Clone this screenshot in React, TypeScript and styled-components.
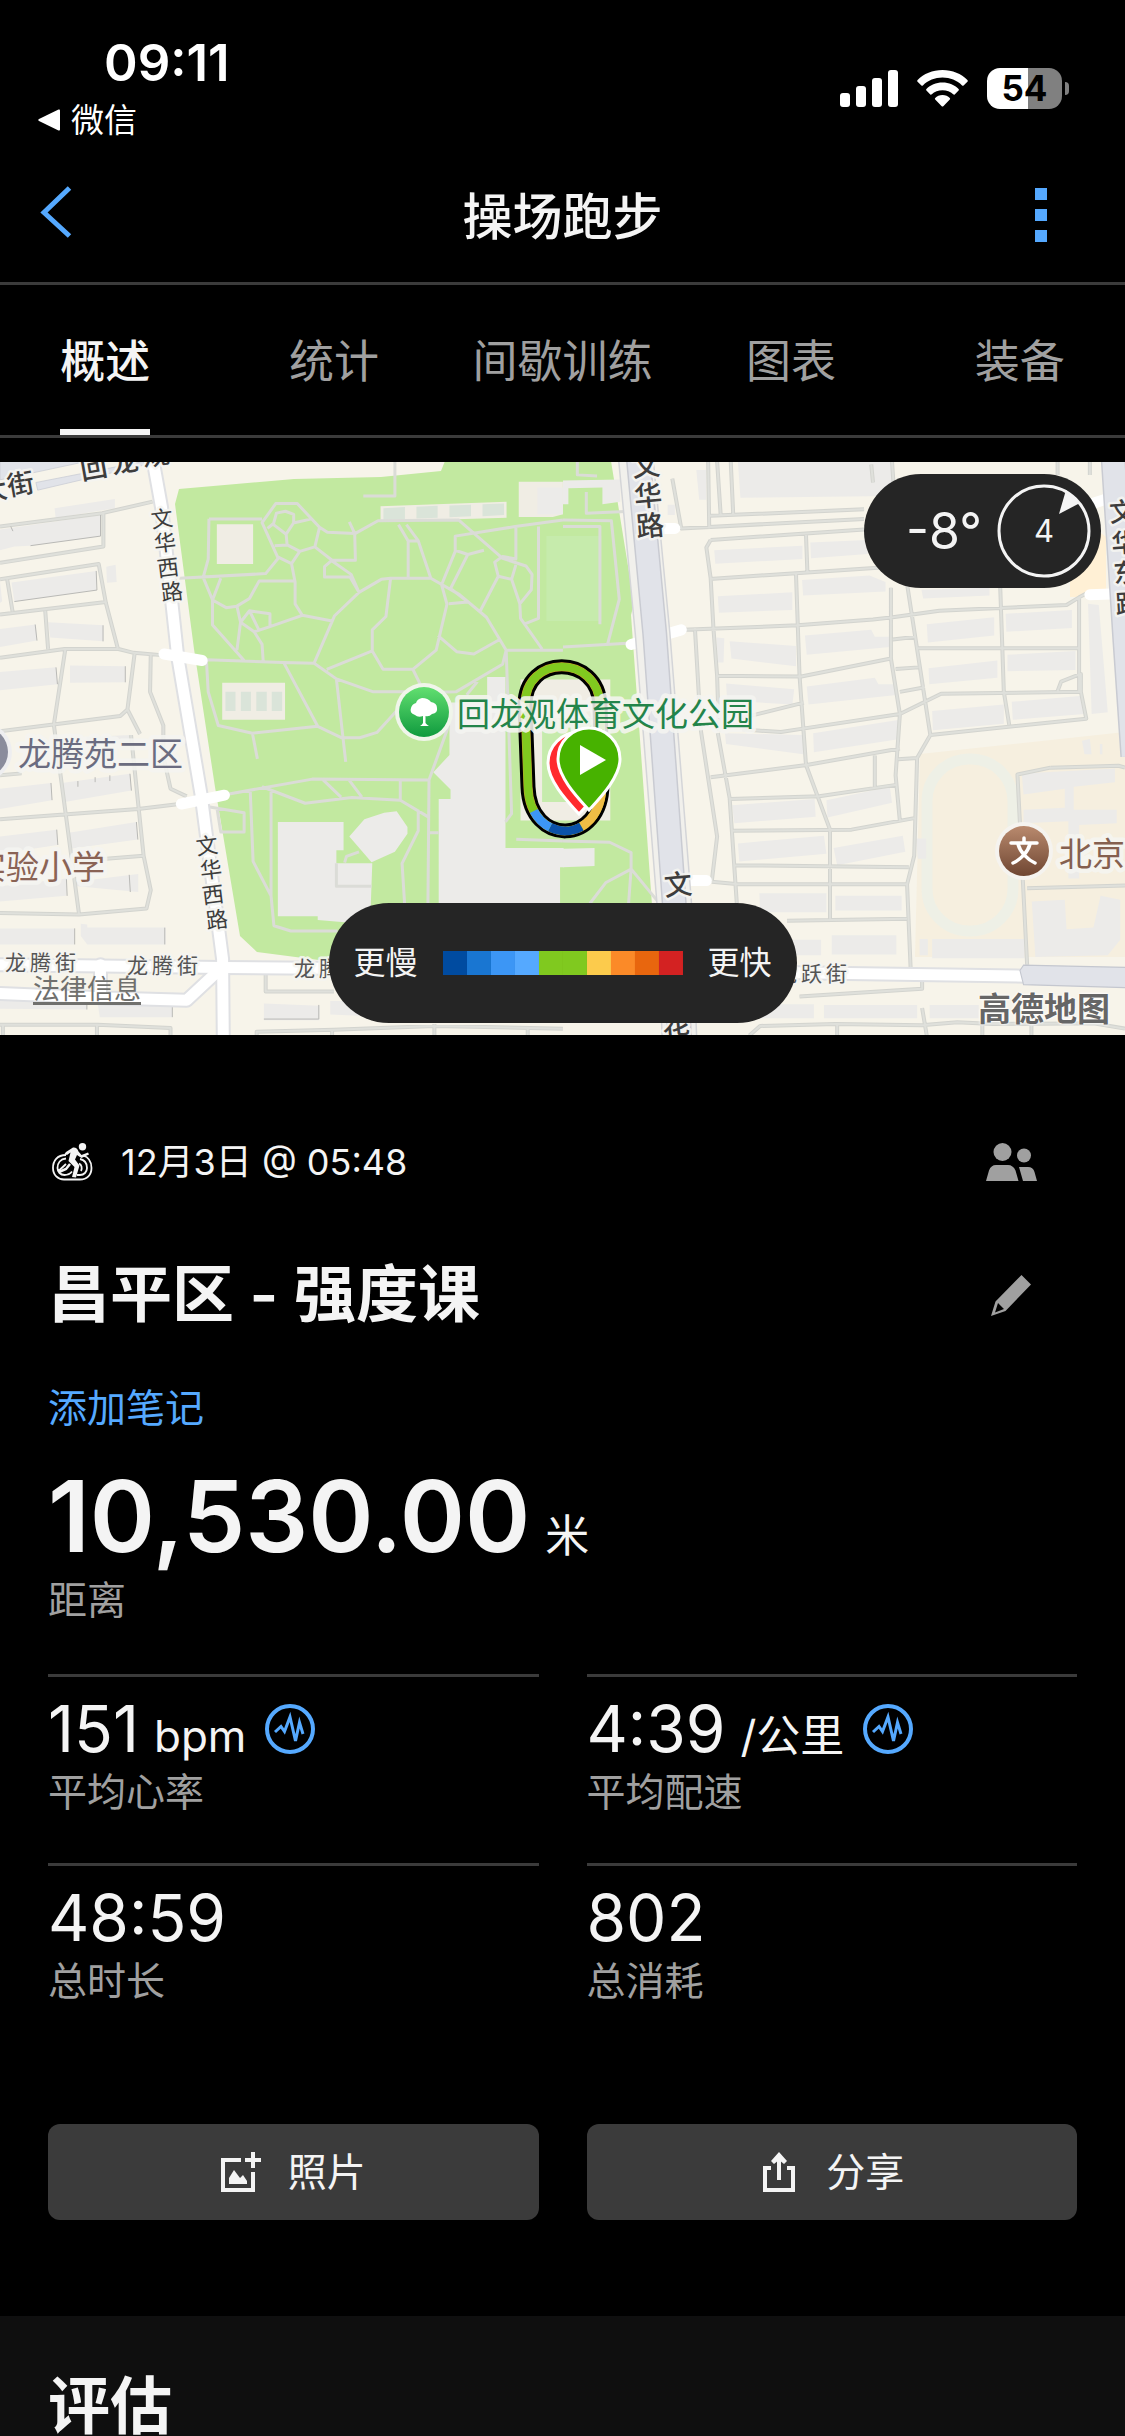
import React from "react";
import styled, { createGlobalStyle } from "styled-components";

const color = {
  bg: "#000000",
  section: "#0f0f0f",
  surface: "#3b3b3b",
  pill: "#252525",
  text: "#f4f4f4",
  muted: "#a0a0a0",
  accent: "#55a9ff",
};

const GlobalStyle = createGlobalStyle`
  *, *::before, *::after { box-sizing: border-box; }
  body {
    margin: 0;
    background: ${color.bg};
    color: ${color.text};
    font-family: Inter, "Noto Sans CJK SC", sans-serif;
  }
  button { font: inherit; color: inherit; background: none; border: 0; padding: 0; }
  a { color: inherit; text-decoration: none; }
  h1, h2, p, dl, dd, dt { margin: 0; }
  svg { display: block; }
`;

const Page = styled.div`
  display: flex;
  flex-direction: column;
  min-height: 100vh;
  overflow-x: hidden;
`;

/* ---------- status bar ---------- */

const StatusBar = styled.div`
  display: flex;
  justify-content: space-between;
  align-items: flex-start;
  padding: 31px 56px 0 38px;
  color: #ffffff;
`;

const StatusLeft = styled.div`
  display: flex;
  flex-direction: column;
`;

const Clock = styled.time`
  padding-left: 66px;
  font-size: 51px;
  line-height: 64px;
  font-weight: 600;
`;

const ReturnLink = styled.a`
  display: flex;
  align-items: center;
  gap: 11px;
  font-size: 33px;
  line-height: 50px;
`;

const StatusRight = styled.div`
  display: flex;
  align-items: center;
  gap: 19px;
  padding-top: 37px;
`;

const Battery = styled.div`
  display: flex;
  align-items: center;
  gap: 3px;
`;

const BatteryBody = styled.div`
  width: 75px;
  height: 41px;
  border-radius: 13px;
  background: linear-gradient(90deg, #ffffff 55%, #808080 55%);
  color: #000000;
  font-size: 35px;
  line-height: 41px;
  font-weight: 700;
  text-align: center;
`;

const BatteryTip = styled.div`
  width: 4px;
  height: 13px;
  border-radius: 0 6px 6px 0;
  background: #808080;
`;

/* ---------- navigation ---------- */

const NavBar = styled.header`
  display: grid;
  grid-template-columns: 90px 1fr 90px;
  align-items: center;
  height: 140px;
  padding: 3px 39px 0;
  border-bottom: 3px solid ${color.surface};
`;

const NavTitle = styled.h1`
  padding-top: 4px;
  font-size: 50px;
  line-height: 60px;
  font-weight: 500;
  text-align: center;
`;

const NavButton = styled.button<{ $end?: boolean }>`
  display: flex;
  justify-content: ${(p) => (p.$end ? "flex-end" : "flex-start")};
  align-items: center;
  height: 90px;
  padding: ${(p) => (p.$end ? "0 39px 0 0" : "0 0 6px")};
`;

const Dots = styled.span`
  display: grid;
  gap: 9px;
  i {
    width: 12px;
    height: 12px;
    background: ${color.accent};
  }
`;

const Tabs = styled.nav`
  display: grid;
  grid-template-columns: repeat(5, 1fr);
  justify-items: center;
  height: 153px;
  margin: 0 -9px 24px;
  border-bottom: 3px solid ${color.surface};
`;

const Tab = styled.button<{ $active?: boolean }>`
  height: 150px;
  padding-top: 9px;
  border-bottom: 6px solid ${(p) => (p.$active ? color.text : "transparent")};
  color: ${(p) => (p.$active ? color.text : color.muted)};
  font-size: 45px;
  line-height: 60px;
  font-weight: ${(p) => (p.$active ? 500 : 400)};
  white-space: nowrap;
`;

/* ---------- map ---------- */

const MapArea = styled.section`
  position: relative;
  height: 573px;
  overflow: hidden;
  background: #f7f4ea;
  > svg {
    width: 100%;
    height: 100%;
  }
`;

const WeatherPill = styled.div`
  position: absolute;
  top: 12px;
  right: 24px;
  display: flex;
  align-items: center;
  gap: 15px;
  height: 114px;
  padding: 0 10px 0 42px;
  border-radius: 57px;
  background: ${color.pill};
  font-size: 50px;
  line-height: 60px;
`;

const LegendPill = styled.div`
  position: absolute;
  bottom: 12px;
  left: 50%;
  transform: translateX(-50%);
  display: flex;
  align-items: center;
  gap: 25px;
  height: 120px;
  padding: 0 25px;
  border-radius: 60px;
  background: ${color.pill};
  font-size: 32px;
  line-height: 48px;
  white-space: nowrap;
`;

const Scale = styled.div`
  display: flex;
`;

const Swatch = styled.i<{ $fill: string }>`
  width: 24px;
  height: 24px;
  background: ${(p) => p.$fill};
`;

const LegalLink = styled.a`
  position: absolute;
  left: 33px;
  bottom: 30px;
  border-bottom: 3px solid #70706d;
  color: #70706d;
  font-size: 27px;
  line-height: 24px;
`;

const MapCredit = styled.span`
  position: absolute;
  right: 15px;
  bottom: 6px;
  color: #666666;
  font-size: 33px;
  line-height: 40px;
  font-weight: 700;
  text-shadow: 0 0 3px #ffffff, 0 0 3px #ffffff;
`;

/* ---------- summary ---------- */

const Summary = styled.main`
  display: flex;
  flex-direction: column;
  padding: 97px 48px 96px;
`;

const Row = styled.div<{ $height: number; $after: number }>`
  display: flex;
  align-items: center;
  justify-content: space-between;
  height: ${(p) => p.$height}px;
  margin-bottom: ${(p) => p.$after}px;
`;

const DateLine = styled.p`
  display: flex;
  align-items: center;
  gap: 28px;
  padding-left: 4px;
  font-size: 36px;
  line-height: 48px;
`;

const Title = styled.h2`
  font-size: 62px;
  line-height: 84px;
  font-weight: 600;
`;

const IconButton = styled.button`
  display: grid;
  place-items: center;
  width: 132px;
  height: 60px;
  color: ${color.muted};
`;

const NoteLink = styled.a`
  align-self: flex-start;
  color: ${color.accent};
  font-size: 39px;
  line-height: 48px;
`;

const Distance = styled.dl`
  display: flex;
  flex-direction: column-reverse;
  margin-top: 24px;
  margin-bottom: 50px;
`;

const Label = styled.dt`
  color: ${color.muted};
  font-size: 39px;
  line-height: 48px;
`;

const BigValue = styled.dd`
  display: flex;
  align-items: baseline;
  gap: 15px;
  font-size: 99px;
  line-height: 120px;
  font-weight: 600;
`;

const Unit = styled.span`
  font-size: 44px;
  line-height: 60px;
  font-weight: 400;
`;

const Stats = styled.dl`
  display: grid;
  grid-template-columns: 1fr 1fr;
  gap: 47px 48px;
`;

const Stat = styled.div`
  display: flex;
  flex-direction: column-reverse;
  gap: 3px;
  padding-top: 16px;
  border-top: 3px solid ${color.surface};
`;

const Value = styled.dd`
  display: flex;
  align-items: baseline;
  gap: 15px;
  height: 72px;
  font-size: 64px;
  line-height: 72px;
  svg {
    align-self: center;
    margin-left: 4px;
  }
`;

const Actions = styled.div`
  display: grid;
  grid-template-columns: 1fr 1fr;
  gap: 48px;
  margin-top: 119px;
`;

const ActionButton = styled.button`
  display: flex;
  align-items: center;
  justify-content: center;
  gap: 27px;
  height: 96px;
  border-radius: 12px;
  background: ${color.surface};
  font-size: 39px;
  line-height: 48px;
`;

const Assessment = styled.section`
  flex: 1;
  padding: 61px 48px 0;
  background: ${color.section};
`;

const SectionTitle = styled.h2`
  font-size: 62px;
  line-height: 60px;
  font-weight: 600;
`;

/* ---------- icons ---------- */

const SignalIcon = () => (
  <svg width="58" height="37" fill="#fff" aria-hidden="true">
    <rect x="0" y="23" width="10" height="14" rx="3" />
    <rect x="16" y="16" width="10" height="21" rx="3" />
    <rect x="32" y="8" width="10" height="29" rx="3" />
    <rect x="48" y="0" width="10" height="37" rx="3" />
  </svg>
);

const WifiIcon = () => (
  <svg width="51" height="37" viewBox="0 0 51 37" fill="#fff" aria-hidden="true">
    <path d="M25.500 0C35.500 0 44.300 3.800 50.400 10Q51.200 10.900 50.400 11.700L46.600 15.500Q45.900 16.100 45.100 15.400C40 10.500 33.100 7.600 25.500 7.600S11 10.500 5.900 15.400Q5.100 16.100 4.400 15.500L.6 11.700Q-.2 10.900 .6 10C6.700 3.800 15.500 0 25.500 0Z" />
    <path d="M25.500 12.600C32 12.600 37.700 15.100 41.600 19Q42.300 19.800 41.600 20.500L37.700 24.400Q37 25 36.200 24.300C33.500 21.700 29.700 20.200 25.500 20.200S17.500 21.700 14.800 24.300Q14 25 13.300 24.400L9.400 20.500Q8.700 19.800 9.400 19C13.300 15.100 19 12.600 25.500 12.600Z" />
    <path d="M25.500 25C28.500 25 31 26.100 32.800 27.900Q33.500 28.700 32.800 29.400L26.300 36.200Q25.500 37 24.700 36.200L18.200 29.400Q17.500 28.700 18.200 27.900C20 26.100 22.500 25 25.500 25Z" />
  </svg>
);

const BackTriangle = () => (
  <svg width="22" height="22" fill="#fff" aria-hidden="true">
    <path d="M22 1.500V20.500Q22 22 20.500 21.400L1 12Q-.5 11 1 10L20.500 .6Q22 0 22 1.500Z" />
  </svg>
);

const ChevronIcon = () => (
  <svg width="34" height="52" fill="none" stroke={color.accent} strokeWidth="5" aria-hidden="true">
    <path d="M30.500 2L5 26.500L30.500 50" />
  </svg>
);

const CyclistIcon = () => (
  <svg width="41" height="38" viewBox="0 0 41 38" fill="none" stroke={color.text} aria-hidden="true">
    <path
      strokeWidth="1.800"
      d="M14 12C5 12 1 18 1 25C1 32 6 36.500 12 36.500H28C35 36.500 39.500 32 39.500 25C39.500 18 36 14 31 12.500"
    />
    <path strokeWidth="1.800" d="M14 15.500C8.500 16 5.500 20 5.500 25C5.500 29 8.500 32 12.500 32C16 32 18 31 20 28.500M28 16C33 17 35 20.500 35 25C35 29 32 32 28 32H25M6.500 28L14 21M27 20.500C29.500 21.500 30.500 25 29 28" />
    <path
      fill={color.text}
      stroke="none"
      d="M14 9L21 4.500Q25 4 26.500 8.500L29.500 12L36 9.500L37 11.500L29.500 15L25 12L23 16.500L27.500 22.500L24 34.500L20 34L22.500 24L16.500 18L18.500 9.500L15 12L12.500 11Z"
    />
    <path stroke={color.text} strokeWidth="2.500" d="M18 21L14 26L7 29" />
    <circle cx="30.500" cy="3.700" r="3.700" fill={color.text} stroke="none" />
  </svg>
);

const PeopleIcon = () => (
  <svg width="51" height="38" viewBox="0 0 51 38" fill="currentColor" aria-hidden="true">
    <circle cx="16.500" cy="9" r="9" />
    <circle cx="38" cy="12.500" r="7" />
    <path d="M0 38L3 27.500Q5 22 10 22H22Q27 22 29.500 27.500L32.500 38ZM33 24H42Q47 24 48.500 29L51 38H37Z" />
  </svg>
);

const PencilIcon = () => (
  <svg width="40" height="41" viewBox="0 0 40 41" fill="currentColor" aria-hidden="true">
    <path
      fillRule="evenodd"
      d="M30.500 0L40 9.500L14.500 36L0 41L4.500 26.500ZM7 28L4 37.500L13 34Z"
    />
  </svg>
);

const PulseIcon = () => (
  <svg width="50" height="50" fill="none" stroke={color.accent} aria-hidden="true">
    <circle cx="25" cy="25" r="23" strokeWidth="4" />
    <path strokeWidth="3" d="M10 28L16 22.500L19.500 27.500L25 13L30.500 37L34.500 18.500L38 30" />
  </svg>
);

const AddPhotoIcon = () => (
  <svg width="40" height="40" fill="none" stroke={color.text} strokeWidth="4" aria-hidden="true">
    <path d="M20 8H2V38H32V20M24 8H40M32 0V16" />
    <path fill={color.text} stroke="none" d="M8 32V26L13 18L19 26L22 23L26 29V32Z" />
  </svg>
);

const ShareIcon = () => (
  <svg width="40" height="40" viewBox="-4 0 40 40" fill="none" stroke={color.text} strokeWidth="4" aria-hidden="true">
    <path d="M8 16H2V38H30V16H24M16 28V5" />
    <path fill={color.text} stroke="none" d="M16 0L24 9L21 12L16 8L11 12L8 9Z" />
  </svg>
);

const WindDial = () => (
  <svg width="94" height="94" viewBox="0 0 94 94" role="img" aria-label="风速 4">
    <circle cx="47" cy="47" r="45" fill="none" stroke={color.text} strokeWidth="3" />
    <path fill={color.text} d="M62 30L69 6L83 19Z" />
    <text x="47" y="58" fill={color.text} fontSize="31" textAnchor="middle">
      4
    </text>
  </svg>
);

/* ---------- map drawing ---------- */

const TileLines = styled.g<{ $stroke: string; $width: number }>`
  fill: none;
  stroke: ${(p) => p.$stroke};
  stroke-width: ${(p) => p.$width}px;
  stroke-linejoin: round;
  path {
    vector-effect: non-scaling-stroke;
  }
`;

const RoundLines = styled(TileLines)`
  stroke-linecap: round;
`;

const Buildings = styled.path`
  fill: #ecebe9;
`;

const MapText = styled.text<{ $fill: string; $size: number; $weight?: number; $halo?: number }>`
  fill: ${(p) => p.$fill};
  font-family: "Noto Sans CJK SC", sans-serif;
  font-size: ${(p) => p.$size}px;
  font-weight: ${(p) => p.$weight ?? 400};
  stroke: rgba(245, 245, 241, 0.9);
  stroke-width: ${(p) => p.$halo ?? 5}px;
  stroke-linejoin: round;
  paint-order: stroke;
`;

const WEST = "translate(0 -12) scale(0.359 0.3827)";
const EAST = "translate(563 -12) scale(0.3584 0.3827)";

const westLanes =
  "M0 200L285 165L425 135M288 165V252L0 295M0 338L275 298L295 400L328 518M20 338L35 422M0 430L295 397M126 420L134 520M0 543L180 520L330 520L372 530L450 536M182 520L150 718M0 735L335 695L355 678L375 532M355 678L390 742M420 532L418 632L455 720V800L475 885L520 905M150 718L220 1212M365 745L400 1060L420 1150L408 1198L220 1214L0 1210M0 965L385 938L500 925M200 1075L400 1060M0 850L60 845";
const westLanes2 =
  "M740 1372V1415H930M0 1502H272L475 1510V1530M8 1500V1530M270 1500V1530M715 1530V1520L930 1515L1210 1505L1568 1512M1210 1500V1530M925 1515V1530M1470 1510V1530";
const westBuildings =
  "M152 152L320 128V152L155 178ZM0 208L280 170V225L85 250L40 252L0 262ZM32 346L268 316V366L40 396ZM296 305L322 300L325 345L298 347ZM0 345L6 395L0 400ZM0 468L100 456L103 498L0 515ZM134 450L288 458V500L140 490ZM0 580L156 568L160 612L0 628ZM195 563L349 565V607L195 608ZM365 745L240 750V770L368 765ZM0 885L142 870L145 915L0 938ZM172 870L362 846L366 890L180 920ZM0 1010L158 992L160 1032L0 1055ZM192 1000L380 972L384 1018L195 1042ZM0 1140L185 1120V1165L0 1180ZM208 1128L385 1108V1155L215 1140ZM0 1250H208V1292H0ZM225 1238L243 1240V1248H461V1292H243L225 1270ZM0 1420L242 1430V1462L0 1460ZM272 1445H480V1482H278ZM735 1446L890 1452V1490H735ZM920 1440H1000V1478L920 1475Z";
const westEdges =
  "M280 170V225L85 250M268 316L270 366L40 396M98 456L103 498M287 458V500M156 568L160 612M349 565V607M142 870L145 915M362 846L366 890M158 992L161 1032M380 972L384 1018M185 1120L187 1165M360 1110L363 1155M208 1250V1292M459 1248V1292M242 1430V1462M480 1445V1482M735 1487H888V1450M217 865V880M265 855V868M306 850V865M30 200L36 212";
const parkPaths =
  "M500 335L740 323L775 283L730 190L768 140H828L890 202L912 215L990 218L1053 185L1278 183L1400 283L1465 303L1482 325L1480 365L1448 402L1450 440L1510 520M582 180H730M582 180L580 285L566 333L592 392V457L680 550M592 392L630 412L660 408L695 388L722 342H820M615 335L592 392M660 408L670 450L660 523M745 205L762 192L770 165L795 160L818 168V190L797 220L762 195M820 190L868 180M797 220L800 250M765 250L800 248L835 265L812 297L775 280M835 265L877 253L890 202M877 253L925 288L990 288L988 218L973 188M925 288L904 305V332H975L1000 372M812 297L822 345V402L842 432L925 447M842 432L750 462L708 475L670 450L695 420L752 428V460M695 420L720 468M708 475L730 508L733 550M1000 372L978 325L925 290M1000 372L932 433L875 557L788 555L575 548M1000 372L1062 338L1088 335H1200L1165 237L1132 195M1110 195L1137 238H1162M1137 238V335M1088 335L1075 435L1037 470V525L1067 573H1150L1215 523L1245 403L1230 352L1268 265V225L1435 200L1568 183M1200 335L1280 378L1355 437L1410 523H1568M1250 402L1303 397L1255 362L1303 273L1268 262M1303 273L1348 262M1338 420L1388 330L1378 293L1400 278L1437 285V200M1388 330L1425 338L1437 300M1425 338L1448 402M1220 485L1272 527L1320 533L1392 495M1037 525L910 573M790 555L885 722L952 752H1002L1050 738L1150 635L1270 632L1400 560L1410 523M875 557L937 598L1040 632H1150M937 598L963 815M1150 573L1180 630M575 550L580 632L608 720L703 740L885 722M703 740L717 807M630 900L870 860L1195 862L1250 720M730 880L850 923L980 908L1115 915L1195 960M900 862L950 907M972 862L1008 907M1115 862V915M697 890L705 1075L755 1165L763 1243L810 1257H940M755 890L755 1165M1195 862L1192 1185M1165 940V995L1120 1080L1127 1185M580 932L680 948V998H615L605 940M1195 1000H1222M1410 523L1425 950L1408 972M1100 30V120H1012M1330 605L1300 640M1500 200V440L1460 455";
const eastPark =
  "M40 30V65L95 68M65 110V165L190 160M0 183L135 185L157 390L125 505M0 200H103V455M0 515L180 505M0 1022L130 1025L190 1052V1095L120 1130L75 1185M190 1095L183 1185M190 1095L265 1180";
const eastLanes =
  "M305 75L330 205L840 180M405 30L408 205M430 30L440 170M468 30L475 170M410 172L840 155M412 235L840 208M412 235L400 255L412 335L420 470L430 590L435 735M678 222L682 322M410 337L650 322L920 305M650 322L660 590L678 823L745 992V1225M335 470L655 458L865 443L920 437L1050 420L1405 405L1440 385L1460 375M430 590L665 592L915 545M915 360L915 545L940 690L928 850L940 970M960 350L1025 745L988 805L980 1060L960 1135L970 1355M920 495L985 488M928 572L992 568M985 518H1440M940 632L1010 620M500 700L672 660M500 730L608 737L670 728L940 690L1055 637L1445 632V585L1390 605L1380 630M1220 360L1230 632L1245 718M1025 745L1460 702L1445 632M1440 385V632M432 740L465 910L485 1185M412 855L680 823L940 780M870 798V880M465 912L715 905L930 875M470 995L805 992L980 962M480 1085L965 1090M415 1128L490 1135H960M625 1230L960 1225M368 465L385 735L430 1010L415 1128M1360 830L1550 825L1568 830M1360 830L1268 848L1295 1345M1295 1145L1568 1138M660 1428L1002 1408V1380M935 808L988 805M860 38L865 85M918 30L922 85M1380 30V65M1470 30V65M520 1530L550 1505L760 1500L1000 1503L1100 1495L1200 1500L1480 1498L1568 1512M765 1500V1530M1002 1458L1015 1530M1170 1503V1530M1307 1503V1530";
const eastBuildings =
  "M488 30H920V120L495 125ZM372 52H400V130H380ZM292 143H312V170H292ZM422 262L668 250V285L425 297ZM690 242L850 235V272L692 283ZM432 382L640 372V418L435 425ZM667 340L855 328L900 345V370L670 380ZM428 490L450 492L448 555H432ZM465 500L650 512V565L470 545ZM675 485L860 470L870 488H912V515L680 535ZM455 610L645 625L640 665L458 655ZM680 618L870 595L880 612H930V640L685 665ZM698 740L940 705V755L700 790ZM452 740L670 745V795L455 768ZM472 928L702 912L705 958L478 975ZM735 915L912 880L918 922L738 960ZM488 1028L728 1008L735 1055L492 1075ZM755 1040L948 1008L955 1050L765 1085ZM548 1158H735V1208H550ZM760 1165H945V1203H760ZM625 1280H720V1320H625ZM750 1268H930V1318H750ZM1000 365L1190 360V380L1005 388ZM1015 455L1203 437V485L1018 503ZM1235 428L1420 418V465L1237 475ZM1020 570L1212 550V595L1022 612ZM1240 535L1430 525V575L1240 578ZM1030 682L1230 665V715L1032 732ZM1252 658L1450 642L1455 690L1255 705ZM1465 402L1495 405L1520 685L1475 690ZM995 1278H1018V1320H995ZM1030 1278H1288V1328H1030ZM1280 845L1540 832V868L1425 880V940H1545V975L1440 980V1120H1410V970L1285 975V940L1400 935V885L1285 900ZM1308 1180L1400 1175L1405 1252L1480 1248L1500 1165L1555 1175V1280L1520 1320L1318 1325ZM728 1450H988V1485H728ZM1023 1450H1160V1485H1023ZM500 1448H700V1485H500ZM985 1015H1013V1068H990ZM1448 760L1470 755L1475 795H1455ZM1498 768H1505V795H1498Z";

const slate = "#e1e3e9";

const pin = "M0 0C-9 -10 -31 -32 -31 -51A31 31 0 0 1 31 -51C31 -32 9 -10 0 0Z";
const lap = "M525 243C525 192 598 192 600 243L602 322C602 384 530 384 528 325Z";
const lapEnd = "M602 322C602 384 530 384 528 325";

const lapParts = [
  { stroke: "#f0bd45", from: 0, length: 38 },
  { stroke: "#0b52a8", from: 38, length: 25 },
  { stroke: "#3c96f5", from: 63, length: 18 },
];

const RouteMap = () => (
  <svg viewBox="0 0 1125 573" preserveAspectRatio="xMidYMid slice" role="img" aria-label="跑步路线地图">
    <defs>
      <linearGradient id="parkPoi" x1="0" y1="0" x2="0" y2="1">
        <stop offset="0" stopColor="#62df70" />
        <stop offset="1" stopColor="#0f9a3e" />
      </linearGradient>
      <linearGradient id="schoolPoi" x1="0" y1="0" x2="0" y2="1">
        <stop offset="0" stopColor="#b98a6e" />
        <stop offset="1" stopColor="#6f4632" />
      </linearGradient>
    </defs>
    <rect width="1125" height="573" fill="#f7f4ea" />

    {/* park and school grounds */}
    <path
      fill="#c2e9a0"
      d="M175 42L179 27L294 17L381 15L441 9L445 -1H611L634 141L631 153L652 443L655 500H334L257 490L240 474L215 325L194 187Z"
    />
    <path fill="#f6efdf" d="M920 292L1125 270V495H915Z" />
    <rect x="927" y="297" width="86" height="172" rx="42" fill="none" stroke="#eef0e6" strokeWidth="11" />
    <path fill="#fff0d5" d="M1070 120L1086 60L1106 75V135H1070Z" />

    <g transform={WEST}>
      <path fill={slate} stroke="#c9ccd4" strokeWidth="2" d="M0 30H240L0 78Z" />
      <path fill={slate} stroke="#c9ccd4" strokeWidth="2" d="M100 85L400 30V40L105 105Z" />
      <path fill="#f0ede4" d="M604 194H705V298H604ZM1060 147L1411 135V177L1060 187ZM619 608H794V705H619ZM1445 83H1568V168L1540 175H1445ZM1450 600H1700V968H1450Z" />
      <path fill="#dae4d9" d="M1068 152L1128 149V180L1068 183ZM1160 148L1219 146V177L1160 179ZM1252 145L1312 143V173L1252 176ZM1344 142L1404 140V170L1344 173ZM628 632H656V682H628ZM671 632H699V682H671ZM714 632H743V682H714ZM757 632H786V682H757Z" />
      <path fill="#c6ebac" d="M1522 225H1675V447H1522ZM1510 700H1660V920H1510Z" />
      <Buildings d={westBuildings} />
      <Buildings d="M774 972H957V1046H937V1080H1037L1033 1185L1035 1240L885 1228V1218H774ZM973 1010L1015 965L1070 948L1105 944L1135 985V1003L1100 1050L1035 1077ZM1357 593H1408V1040H1570V1090H1560V1185H1222V912H1255V887L1207 842L1252 797V660H1357ZM1497 98H1568V168H1497Z" />
      <TileLines $stroke="#d3d4cf" $width={4}>
        <path d={westLanes} />
        <path d={westLanes2} />
      </TileLines>
      <TileLines $stroke="#dfe0db" $width={2}>
        <path d={westLanes} />
        <path d={westLanes2} />
      </TileLines>
      <TileLines $stroke="#dbdcd7" $width={3}>
        <path d={parkPaths} />
        <path d="M1438 1017L1568 1022" />
        <path d="M960 1078L965 1062L1000 1050" />
        <path d="M937 1080V1140H1035" />
      </TileLines>
      <TileLines $stroke="#b9b9b6" $width={1}>
        <path d={westEdges} />
      </TileLines>
    </g>

    <g transform={EAST}>
      <Buildings d="M0 80L160 77V135L110 142V98L15 100V142H0ZM0 1042L88 1040V1087L0 1090Z" />
      <Buildings d={eastBuildings} />
      <TileLines $stroke="#d3d4cf" $width={4}>
        <path d={eastLanes} />
      </TileLines>
      <TileLines $stroke="#dfe0db" $width={2}>
        <path d={eastLanes} />
      </TileLines>
      <TileLines $stroke="#dbdcd7" $width={3}>
        <path d={eastPark} />
      </TileLines>
    </g>

    {/* streets */}
    <g transform={WEST}>
      <RoundLines $stroke="#dfe0e3" $width={15}>
        <path d="M425 20L450 150L495 540L560 900L620 1330L622 1540" />
        <path d="M0 1345L620 1352L2000 1363L2860 1375" />
        <path d="M0 1420L300 1432L520 1438L615 1355M280 1345V1420" />
      </RoundLines>
      <RoundLines $stroke="#ffffff" $width={11}>
        <path d="M425 20L450 150L495 540L560 900L620 1330L622 1540" />
        <path d="M0 1345L620 1352L2000 1363L2860 1375" />
        <path d="M0 1420L300 1432L520 1438L615 1355M280 1345V1420" />
        <path d="M457 533L563 550M505 925L625 902" />
      </RoundLines>
    </g>
    <g transform={EAST}>
      <RoundLines $stroke="#ffffff" $width={11}>
        <path d="M190 508L330 470M280 205H312M350 1125H400M1470 378L1568 375M1460 145L1510 130" />
      </RoundLines>
      <TileLines $stroke="#d4d5d8" $width={36}>
        <path d="M203 20L250 480L310 1180L325 1540" />
      </TileLines>
      <TileLines $stroke="#f1f0ec" $width={33}>
        <path d="M203 20L250 480L310 1180L325 1540" />
      </TileLines>
      <TileLines $stroke="#c9cbd2" $width={25}>
        <path d="M210 20L256 480L310 1180L325 1540" />
        <path d="M1535 20L1568 500L1590 800" />
      </TileLines>
      <TileLines $stroke={slate} $width={22}>
        <path d="M210 20L256 480L310 1180L325 1540" />
        <path d="M1535 20L1568 500L1590 800" />
      </TileLines>
      <path fill={slate} stroke="#c4c7cf" strokeWidth="3" d="M1275 1360L1285 1346L1580 1352V1405L1285 1397Z" />
    </g>

    {/* street names run glyph by glyph along their street */}
    <MapText $fill="#3d3d3d" $size={27} $weight={500} x="-18 9" y="40 34" rotate="-10">大街</MapText>
    <MapText $fill="#3d3d3d" $size={27} $weight={500} x="82 113 144" y="18 12 5" rotate="-10">回龙观</MapText>
    <MapText $fill="#3d3d3d" $size={22} x="152 155 158 162" y="66 90 115 139" rotate="-7">文华西路</MapText>
    <MapText $fill="#3d3d3d" $size={22} x="197 201 203 207" y="393 417 442 467" rotate="-7">文华西路</MapText>
    <MapText $fill="#3d3d3d" $size={28} $weight={500} x="633 635 637" y="15 45 75" rotate="-5">文华路</MapText>
    <MapText $fill="#3d3d3d" $size={28} $weight={500} x="665 664" y="434 585" rotate="-5">文华</MapText>
    <MapText $fill="#3d3d3d" $size={26} $weight={500} x="1110 1112 1114 1116" y="60 91 121 152" rotate="-4">文华东路</MapText>
    <MapText $fill="#555555" $size={21} x="5 30 55" y="508">龙腾街</MapText>
    <MapText $fill="#555555" $size={21} x="127 152 177" y="511">龙腾街</MapText>
    <MapText $fill="#555555" $size={21} x="294 319 344" y="514">龙腾街</MapText>
    <MapText $fill="#555555" $size={21} x="776 801 826" y="519">龙跃街</MapText>

    {/* recorded laps */}
    <path d={lap} fill="none" stroke="#000000" strokeWidth="15" />
    <path d={lap} fill="none" stroke="#c9a227" strokeWidth="9" />
    <path d={lap} fill="none" stroke="#80c91f" strokeWidth="8" />
    {lapParts.map((part) => (
      <path
        key={part.stroke}
        d={lapEnd}
        pathLength={100}
        fill="none"
        stroke={part.stroke}
        strokeWidth="9"
        strokeDasharray={`${part.length} 200`}
        strokeDashoffset={-part.from}
      />
    ))}

    {/* places */}
    <circle cx="-17" cy="290" r="29" fill="#eeeef0" />
    <circle cx="-17" cy="290" r="25" fill="#8a8c9c" />
    <MapText $fill="#6b6c80" $size={33} $halo={9} x="18" y="304">龙腾苑二区</MapText>
    <MapText $fill="#8a6355" $size={33} $halo={9} x="-27" y="417">实验小学</MapText>

    <circle cx="424" cy="250" r="29" fill="#f0f5ea" />
    <circle cx="424" cy="250" r="25" fill="url(#parkPoi)" />
    <path
      fill="#ffffff"
      d="M415 253Q409 251 411 246Q412 242 416 241Q417 237 422 236Q428 236 431 240Q437 241 437 246Q438 251 432 252Q429 255 425.500 254V261Q427 263 429 264H420Q422 263 423 261V254Q418 256 415 253Z"
    />
    <MapText $fill="#23844a" $size={33} $halo={9} x="457" y="264">回龙观体育文化公园</MapText>

    <circle cx="1024" cy="389" r="29" fill="#f5f3ef" />
    <circle cx="1024" cy="389" r="25" fill="url(#schoolPoi)" />
    <path
      fill="none"
      stroke="#ffffff"
      strokeWidth="3.500"
      strokeLinecap="round"
      d="M1011 381H1037M1024 376V381M1018 382C1020 390 1028 398 1035 401M1030 382C1028 390 1020 398 1013 401"
    />
    <MapText $fill="#85604f" $size={33} $halo={9} x="1059" y="404">北京</MapText>

    {/* finish and start markers */}
    <path d={pin} transform="translate(579 352)" fill="#ff2a2e" stroke="#ffffff" strokeWidth="3" />
    <path d={pin} transform="translate(589 348)" fill="#47b200" stroke="#ffffff" strokeWidth="3" />
    <path fill="#ffffff" d="M580 283L606 298L580 313Z" />
  </svg>
);

/* ---------- data ---------- */

const tabs = ["概述", "统计", "间歇训练", "图表", "装备"];

const paceScale = [
  "#004ba0", "#1976d2", "#3c96f5", "#55a9ff", "#80c91f",
  "#80c91f", "#fccb4c", "#fb8a28", "#e8660e", "#d32222",
];

const stats = [
  { label: "平均心率", value: "151", unit: "bpm", zones: true },
  { label: "平均配速", value: "4:39", unit: "/公里", zones: true },
  { label: "总时长", value: "48:59" },
  { label: "总消耗", value: "802" },
];

export default function App() {
  return (
    <Page>
      <GlobalStyle />
      <StatusBar>
        <StatusLeft>
          <Clock>09:11</Clock>
          <ReturnLink href="#wechat">
            <BackTriangle />
            微信
          </ReturnLink>
        </StatusLeft>
        <StatusRight>
          <SignalIcon />
          <WifiIcon />
          <Battery>
            <BatteryBody>54</BatteryBody>
            <BatteryTip />
          </Battery>
        </StatusRight>
      </StatusBar>

      <NavBar>
        <NavButton aria-label="返回">
          <ChevronIcon />
        </NavButton>
        <NavTitle>操场跑步</NavTitle>
        <NavButton $end aria-label="更多">
          <Dots>
            <i />
            <i />
            <i />
          </Dots>
        </NavButton>
      </NavBar>

      <Tabs>
        {tabs.map((name, i) => (
          <Tab key={name} $active={i === 0}>
            {name}
          </Tab>
        ))}
      </Tabs>

      <MapArea>
        <RouteMap />
        <LegalLink href="#legal">法律信息</LegalLink>
        <MapCredit>高德地图</MapCredit>
        <WeatherPill>
          <span>-8°</span>
          <WindDial />
        </WeatherPill>
        <LegendPill>
          <span>更慢</span>
          <Scale>
            {paceScale.map((fill, i) => (
              <Swatch key={i} $fill={fill} />
            ))}
          </Scale>
          <span>更快</span>
        </LegendPill>
      </MapArea>

      <Summary>
        <Row $height={60} $after={61}>
          <DateLine>
            <CyclistIcon />
            12月3日 @ 05:48
          </DateLine>
          <IconButton aria-label="隐私">
            <PeopleIcon />
          </IconButton>
        </Row>
        <Row $height={84} $after={47}>
          <Title>昌平区 - 强度课</Title>
          <IconButton aria-label="编辑">
            <PencilIcon />
          </IconButton>
        </Row>
        <NoteLink href="#note">添加笔记</NoteLink>

        <Distance>
          <Label>距离</Label>
          <BigValue>
            10,530.00
            <Unit>米</Unit>
          </BigValue>
        </Distance>

        <Stats>
          {stats.map((s) => (
            <Stat key={s.label}>
              <Label>{s.label}</Label>
              <Value>
                {s.value}
                {s.unit && <Unit>{s.unit}</Unit>}
                {s.zones && <PulseIcon />}
              </Value>
            </Stat>
          ))}
        </Stats>

        <Actions>
          <ActionButton>
            <AddPhotoIcon />
            照片
          </ActionButton>
          <ActionButton>
            <ShareIcon />
            分享
          </ActionButton>
        </Actions>
      </Summary>

      <Assessment>
        <SectionTitle>评估</SectionTitle>
      </Assessment>
    </Page>
  );
}
